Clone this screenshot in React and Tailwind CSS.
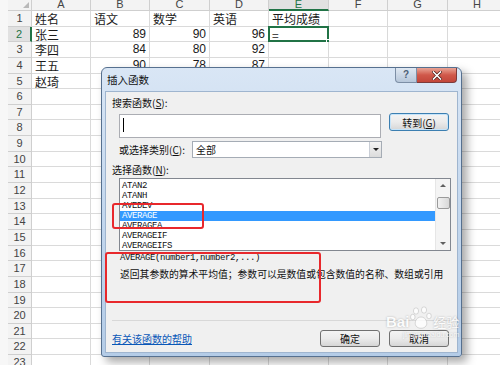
import React from 'react';

const CJK = { fontFamily: '"Noto Sans CJK SC", "Noto Sans", sans-serif' };

const cols = [
  { key: 'A', w: 'w-[59px]' },
  { key: 'B', w: 'w-[59px]' },
  { key: 'C', w: 'w-[60px]' },
  { key: 'D', w: 'w-[59px]' },
  { key: 'E', w: 'w-[60px]' },
  { key: 'F', w: 'w-[59px]' },
  { key: 'G', w: 'w-[60px]' },
  { key: 'H', w: 'w-[59px]' },
];

const data = {
  1: ['姓名', '语文', '数学', '英语', '平均成绩'],
  2: ['张三', '89', '90', '96', '='],
  3: ['李四', '84', '80', '92'],
  4: ['王五', '90', '78', '87'],
  5: ['赵琦'],
};

const functions = ['ATAN2', 'ATANH', 'AVEDEV', 'AVERAGE', 'AVERAGEA', 'AVERAGEIF', 'AVERAGEIFS'];

const isNum = (v) => /^\d+$/.test(v);

const Sheet = () => {
  const rows = Array.from({ length: 23 }, (_, i) => i + 1);
  return (
    <div className="flex flex-col">
      {/* column headers */}
      <div className="flex h-[11px]">
        <div className="w-[8px] shrink-0 bg-[#f7f7f7]" />
        <div className="relative w-[24px] shrink-0 border-r border-b border-[#cfcfcf] bg-[#f3f3f3]">
          <div className="absolute right-[2px] bottom-[2px] h-0 w-0 border-l-[6px] border-t-[6px] border-l-transparent border-t-transparent border-b-0 border-r-[6px] border-r-transparent" />
          <div className="absolute right-[2px] bottom-[2px] h-[6px] w-[6px] bg-[#b9b9b9] [clip-path:polygon(100%_0,100%_100%,0_100%)]" />
        </div>
        {cols.map((c) => (
          <div
            key={c.key}
            className={`${c.w} shrink-0 overflow-hidden text-center text-[11px] leading-[9px] ${
              c.key === 'E'
                ? 'border-b-2 border-r border-b-[#217346] border-r-[#cfcfcf] bg-[#e1e1e1] text-[#217346]'
                : 'border-r border-b border-[#cfcfcf] bg-[#f3f3f3] text-[#444]'
            }`}
            style={{ fontFamily: '"Liberation Sans", sans-serif' }}
          >
            {c.key}
          </div>
        ))}
      </div>
      {rows.map((r) => (
        <div key={r} className="flex h-[15.65px]">
          <div className="w-[8px] shrink-0 bg-[#f7f7f7]" />
          <div
            className={`w-[24px] shrink-0 text-center text-[11px] leading-[15px] ${
              r === 2
                ? 'border-r-2 border-b border-r-[#217346] border-b-[#cfcfcf] bg-[#e1e1e1] text-[#217346]'
                : 'border-r border-b border-[#cfcfcf] bg-[#f3f3f3] text-[#444]'
            }`}
            style={{ fontFamily: '"Liberation Sans", sans-serif' }}
          >
            {r}
          </div>
          {cols.map((c, ci) => {
            const v = (data[r] || [])[ci];
            const selected = r === 2 && c.key === 'E';
            return (
              <div
                key={c.key}
                className={`${c.w} relative shrink-0 overflow-visible border-r border-b border-[#dadada] bg-white px-[3px] leading-[15px] text-[#1a1a1a] ${
                  v && isNum(v) ? 'text-right text-[12px]' : 'text-left text-[12px]'
                }`}
                style={v && isNum(v) ? { fontFamily: '"Liberation Sans", sans-serif' } : CJK}
              >
                {v}
                {selected && (
                  <>
                    <div className="absolute -top-[1px] -left-[1px] -right-[1px] -bottom-[1px] border-2 border-[#217346]" />
                    <div className="absolute -right-[3px] -bottom-[3px] h-[5px] w-[5px] border border-white bg-[#217346]" />
                  </>
                )}
              </div>
            );
          })}
        </div>
      ))}
    </div>
  );
};

const WinButton = ({ children, className = '' }) => (
  <div
    className={`flex items-center justify-center rounded-[3px] border bg-gradient-to-b from-[#f4f4f4] via-[#ebebeb] to-[#d6d6d6] text-[10px] text-[#111] ${className}`}
    style={CJK}
  >
    {children}
  </div>
);

const Dialog = () => (
  <div className="absolute left-[101px] top-[67px] flex h-[290px] w-[361px] flex-col rounded-t-[6px] rounded-b-[3px] border border-[#56708f] bg-gradient-to-b from-[#d9e6f5] via-[#c3d7ee] to-[#b4cce7] shadow-[5px_5px_10px_rgba(0,0,0,0.35)]">
    {/* title bar */}
    <div className="flex h-[24px] items-start justify-between pl-[5px] pr-[4px]">
      <div className="mt-[5px] text-[10.5px] leading-[14px] text-[#111]" style={CJK}>
        插入函数
      </div>
      <div className="flex">
        <div
          className="flex h-[15px] w-[22px] items-center justify-center rounded-bl-[4px] border border-t-0 border-[#7c8ea5] bg-gradient-to-b from-[#dfe8f2] to-[#b7c7da] text-[10px] font-bold leading-none text-[#4d5f76]"
          style={{ fontFamily: '"Liberation Sans", sans-serif' }}
        >
          ?
        </div>
        <div className="flex h-[15px] w-[40px] items-center justify-center rounded-br-[4px] border border-t-0 border-l-0 border-[#7c3a3a] bg-gradient-to-b from-[#e8a395] via-[#d0584a] to-[#c2463a]">
          <svg width="10" height="9" viewBox="0 0 10 9">
            <path d="M1.5 1 L8.5 8 M8.5 1 L1.5 8" stroke="#4a1a16" strokeWidth="3" strokeLinecap="square" />
            <path d="M1.5 1 L8.5 8 M8.5 1 L1.5 8" stroke="#ffffff" strokeWidth="1.6" strokeLinecap="square" />
          </svg>
        </div>
      </div>
    </div>

    {/* client area */}
    <div className="relative mx-[4px] flex h-[260px] flex-col bg-[#f0f0f0] pl-[6px] shadow-[0_0_0_1px_#9fb5cf]" style={CJK}>
      <div className="mt-[4px] h-[14px] text-[10px] leading-[14px] text-[#111]">
        搜索函数(<span className="underline">S</span>):
      </div>

      <div className="mt-[4px] flex items-start pl-[7px]">
        <div className="flex h-[24px] w-[262px] items-start border border-[#abadb3] bg-white pl-[3px] pt-[3px]">
          <div className="h-[14px] w-px bg-black" />
        </div>
        <WinButton className="ml-[8px] -mt-[1px] h-[18px] w-[60px] border-[#3c7fb1] shadow-[inset_0_0_0_1px_#c5e4fa]">
          转到(<span className="underline">G</span>)
        </WinButton>
      </div>

      <div className="mt-[3px] flex items-center pl-[7px]">
        <div className="w-[73px] text-[10px] leading-[14px] text-[#111]">
          或选择类别(<span className="underline">C</span>):
        </div>
        <div className="flex h-[17px] w-[190px] items-center justify-between border border-[#a5acb5] bg-white pl-[3px]">
          <span className="text-[10px] leading-[14px] text-[#111]">全部</span>
          <div className="flex h-[15px] w-[12px] items-center justify-center border-l border-[#c9ced6] bg-gradient-to-b from-[#f4f4f4] to-[#dcdcdc]">
            <div className="h-0 w-0 border-x-[3px] border-t-[3px] border-x-transparent border-t-[#222]" />
          </div>
        </div>
      </div>

      <div className="mt-[5px] h-[14px] text-[10px] leading-[14px] text-[#111]">
        选择函数(<span className="underline">N</span>):
      </div>

      <div className="ml-[7px] mt-px flex h-[73px] w-[332px] border border-[#828790] bg-white">
        <div
          className="flex flex-1 flex-col pt-[2px] text-[9px] tracking-[-0.4px] text-[#111]"
          style={{ fontFamily: '"Liberation Mono", monospace' }}
        >
          {functions.map((f) => (
            <div
              key={f}
              className={`h-[10px] pl-[2px] leading-[10px] ${f === 'AVERAGE' ? 'bg-[#3399ff] text-white' : ''}`}
            >
              {f}
            </div>
          ))}
        </div>
        <div className="flex w-[15px] flex-col items-center border-l border-[#e6e6e6] bg-[#f4f4f4]">
          <div className="mt-[5px] h-0 w-0 border-x-[3px] border-b-[3px] border-x-transparent border-b-[#606060]" />
          <div className="mt-[10px] h-[12px] w-[13px] rounded-[2px] border border-[#9a9a9a] bg-gradient-to-r from-[#f2f2f2] to-[#d8d8d8]" />
          <div className="mt-auto mb-[5px] h-0 w-0 border-x-[3px] border-t-[3px] border-x-transparent border-t-[#606060]" />
        </div>
      </div>

      <div className="pl-[8px]">
        <div
          className="mt-[2px] h-[10px] text-[9px] leading-[10px] tracking-[-0.4px] text-[#111]"
          style={{ fontFamily: '"Liberation Mono", monospace' }}
        >
          AVERAGE(number1,number2,...)
        </div>
        <div className="mt-[5px] h-[12px] whitespace-nowrap text-[9.8px] leading-[12px] text-[#111]">
          返回其参数的算术平均值；参数可以是数值或包含数值的名称、数组或引用
        </div>
      </div>

      <div className="mt-[40px] mr-[6px] border-t border-[#d8d8d8]" />

      <div className="mt-[9px] flex h-[17px] items-center">
        <span className="text-[10px] leading-[12px] text-[#0a58b8] underline">有关该函数的帮助</span>
        <WinButton className="ml-auto h-[17px] w-[60px] border-[#707070]">确定</WinButton>
        <WinButton className="ml-[9px] mr-[8px] h-[17px] w-[60px] border-[#707070]">取消</WinButton>
      </div>

      {/* red annotation boxes */}
      <div className="pointer-events-none absolute left-[6px] top-[111px] h-[26px] w-[92px] rounded-[3px] border-2 border-[#e8282c]" />
      <div className="pointer-events-none absolute -left-[1px] top-[160px] h-[51px] w-[216px] rounded-[3px] border-2 border-[#e8282c]" />
    </div>
  </div>
);

const Watermark = () => (
  <div className="pointer-events-none absolute left-[386px] top-[306px] flex flex-col items-end opacity-80">
    <div className="flex items-end">
      <span
        className="text-[15px] font-bold leading-[16px] text-white [text-shadow:0_0_2px_rgba(0,0,0,0.35)]"
        style={{ fontFamily: '"Liberation Sans", sans-serif' }}
      >
        Bai
      </span>
      <svg width="22" height="24" viewBox="0 0 22 24" className="mx-[1px]">
        <g fill="#ffffff" stroke="#b5b5b5" strokeWidth="0.6">
          <ellipse cx="6" cy="5" rx="2.6" ry="3.2" />
          <ellipse cx="14" cy="4" rx="2.6" ry="3.2" />
          <ellipse cx="2.8" cy="11" rx="2.3" ry="2.8" />
          <ellipse cx="19" cy="10" rx="2.3" ry="2.8" />
          <path d="M11 11 C6 11 4 17 6 20 C8 23 14 23 16 20 C18 17 16 11 11 11 Z" />
        </g>
      </svg>
      <span className="text-[13px] leading-[16px] text-white [text-shadow:0_0_2px_rgba(0,0,0,0.35)]" style={CJK}>
        经验
      </span>
    </div>
    <span
      className="text-[7px] leading-[9px] text-white [text-shadow:0_0_2px_rgba(0,0,0,0.35)]"
      style={{ fontFamily: '"Liberation Sans", sans-serif' }}
    >
      jingyan.baidu.com
    </span>
  </div>
);

export default function App() {
  return (
    <div className="relative h-[365px] w-[500px] overflow-hidden bg-white">
      <Sheet />
      <Dialog />
      <Watermark />
    </div>
  );
}
